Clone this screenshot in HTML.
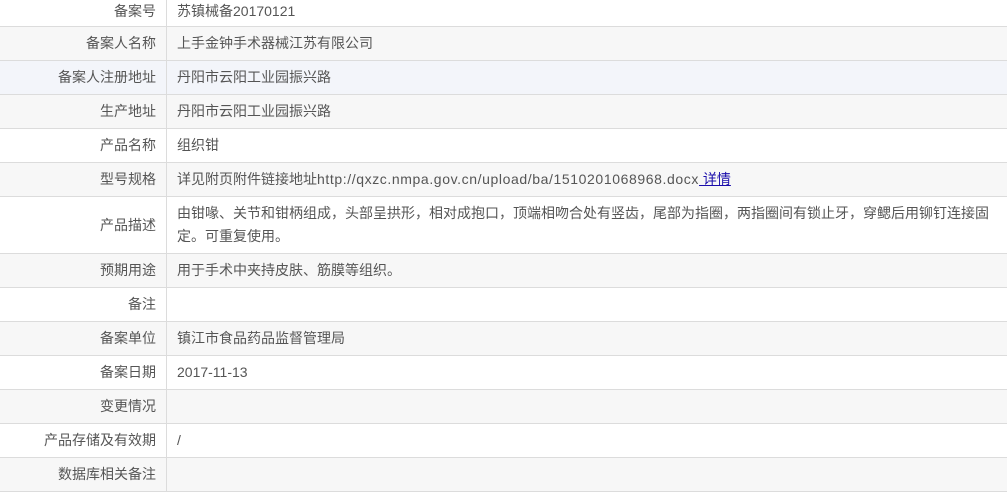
<!DOCTYPE html>
<html><head><meta charset="utf-8"><style>
body{margin:0;background:#fff;font-family:"Liberation Sans","Noto Sans CJK SC",sans-serif;font-size:14px;color:#555;}
table{border-collapse:collapse;width:1007px;table-layout:fixed;}
td{border-bottom:1px solid #dcdcdc;height:33px;padding:0;vertical-align:middle;line-height:23px;}
td.l{width:156px;text-align:right;padding-right:10px;border-right:1px solid #dcdcdc;color:#555;}
td.v{padding-left:10px;padding-right:14px;}
tr:nth-child(even){background:#f7f7f7;}
tr.h{background:#f3f5fa;}
tr.first td{height:26px;line-height:20px;}
tr.first td span{position:relative;top:-2px;}
tr.tall td{height:56px;}
a{color:#1a0dab;text-decoration:underline;}
.u{letter-spacing:0.6px;}
</style></head><body>
<table>
<tr class="first"><td class="l"><span>备案号</span></td><td class="v"><span>苏镇械备20170121</span></td></tr>
<tr><td class="l">备案人名称</td><td class="v">上手金钟手术器械江苏有限公司</td></tr>
<tr class="h"><td class="l">备案人注册地址</td><td class="v">丹阳市云阳工业园振兴路</td></tr>
<tr><td class="l">生产地址</td><td class="v">丹阳市云阳工业园振兴路</td></tr>
<tr><td class="l">产品名称</td><td class="v">组织钳</td></tr>
<tr><td class="l">型号规格</td><td class="v">详见附页附件链接地址<span class="u">http://qxzc.nmpa.gov.cn/upload/ba/1510201068968.docx</span><a>&nbsp;详情</a></td></tr>
<tr class="tall"><td class="l">产品描述</td><td class="v">由钳喙、关节和钳柄组成，头部呈拱形，相对成抱口，顶端相吻合处有竖齿，尾部为指圈，两指圈间有锁止牙，穿鳃后用铆钉连接固定。可重复使用。</td></tr>
<tr><td class="l">预期用途</td><td class="v">用于手术中夹持皮肤、筋膜等组织。</td></tr>
<tr><td class="l">备注</td><td class="v"></td></tr>
<tr><td class="l">备案单位</td><td class="v">镇江市食品药品监督管理局</td></tr>
<tr><td class="l">备案日期</td><td class="v">2017-11-13</td></tr>
<tr><td class="l">变更情况</td><td class="v"></td></tr>
<tr><td class="l">产品存储及有效期</td><td class="v">/</td></tr>
<tr><td class="l">数据库相关备注</td><td class="v"></td></tr>
</table>
</body></html>
